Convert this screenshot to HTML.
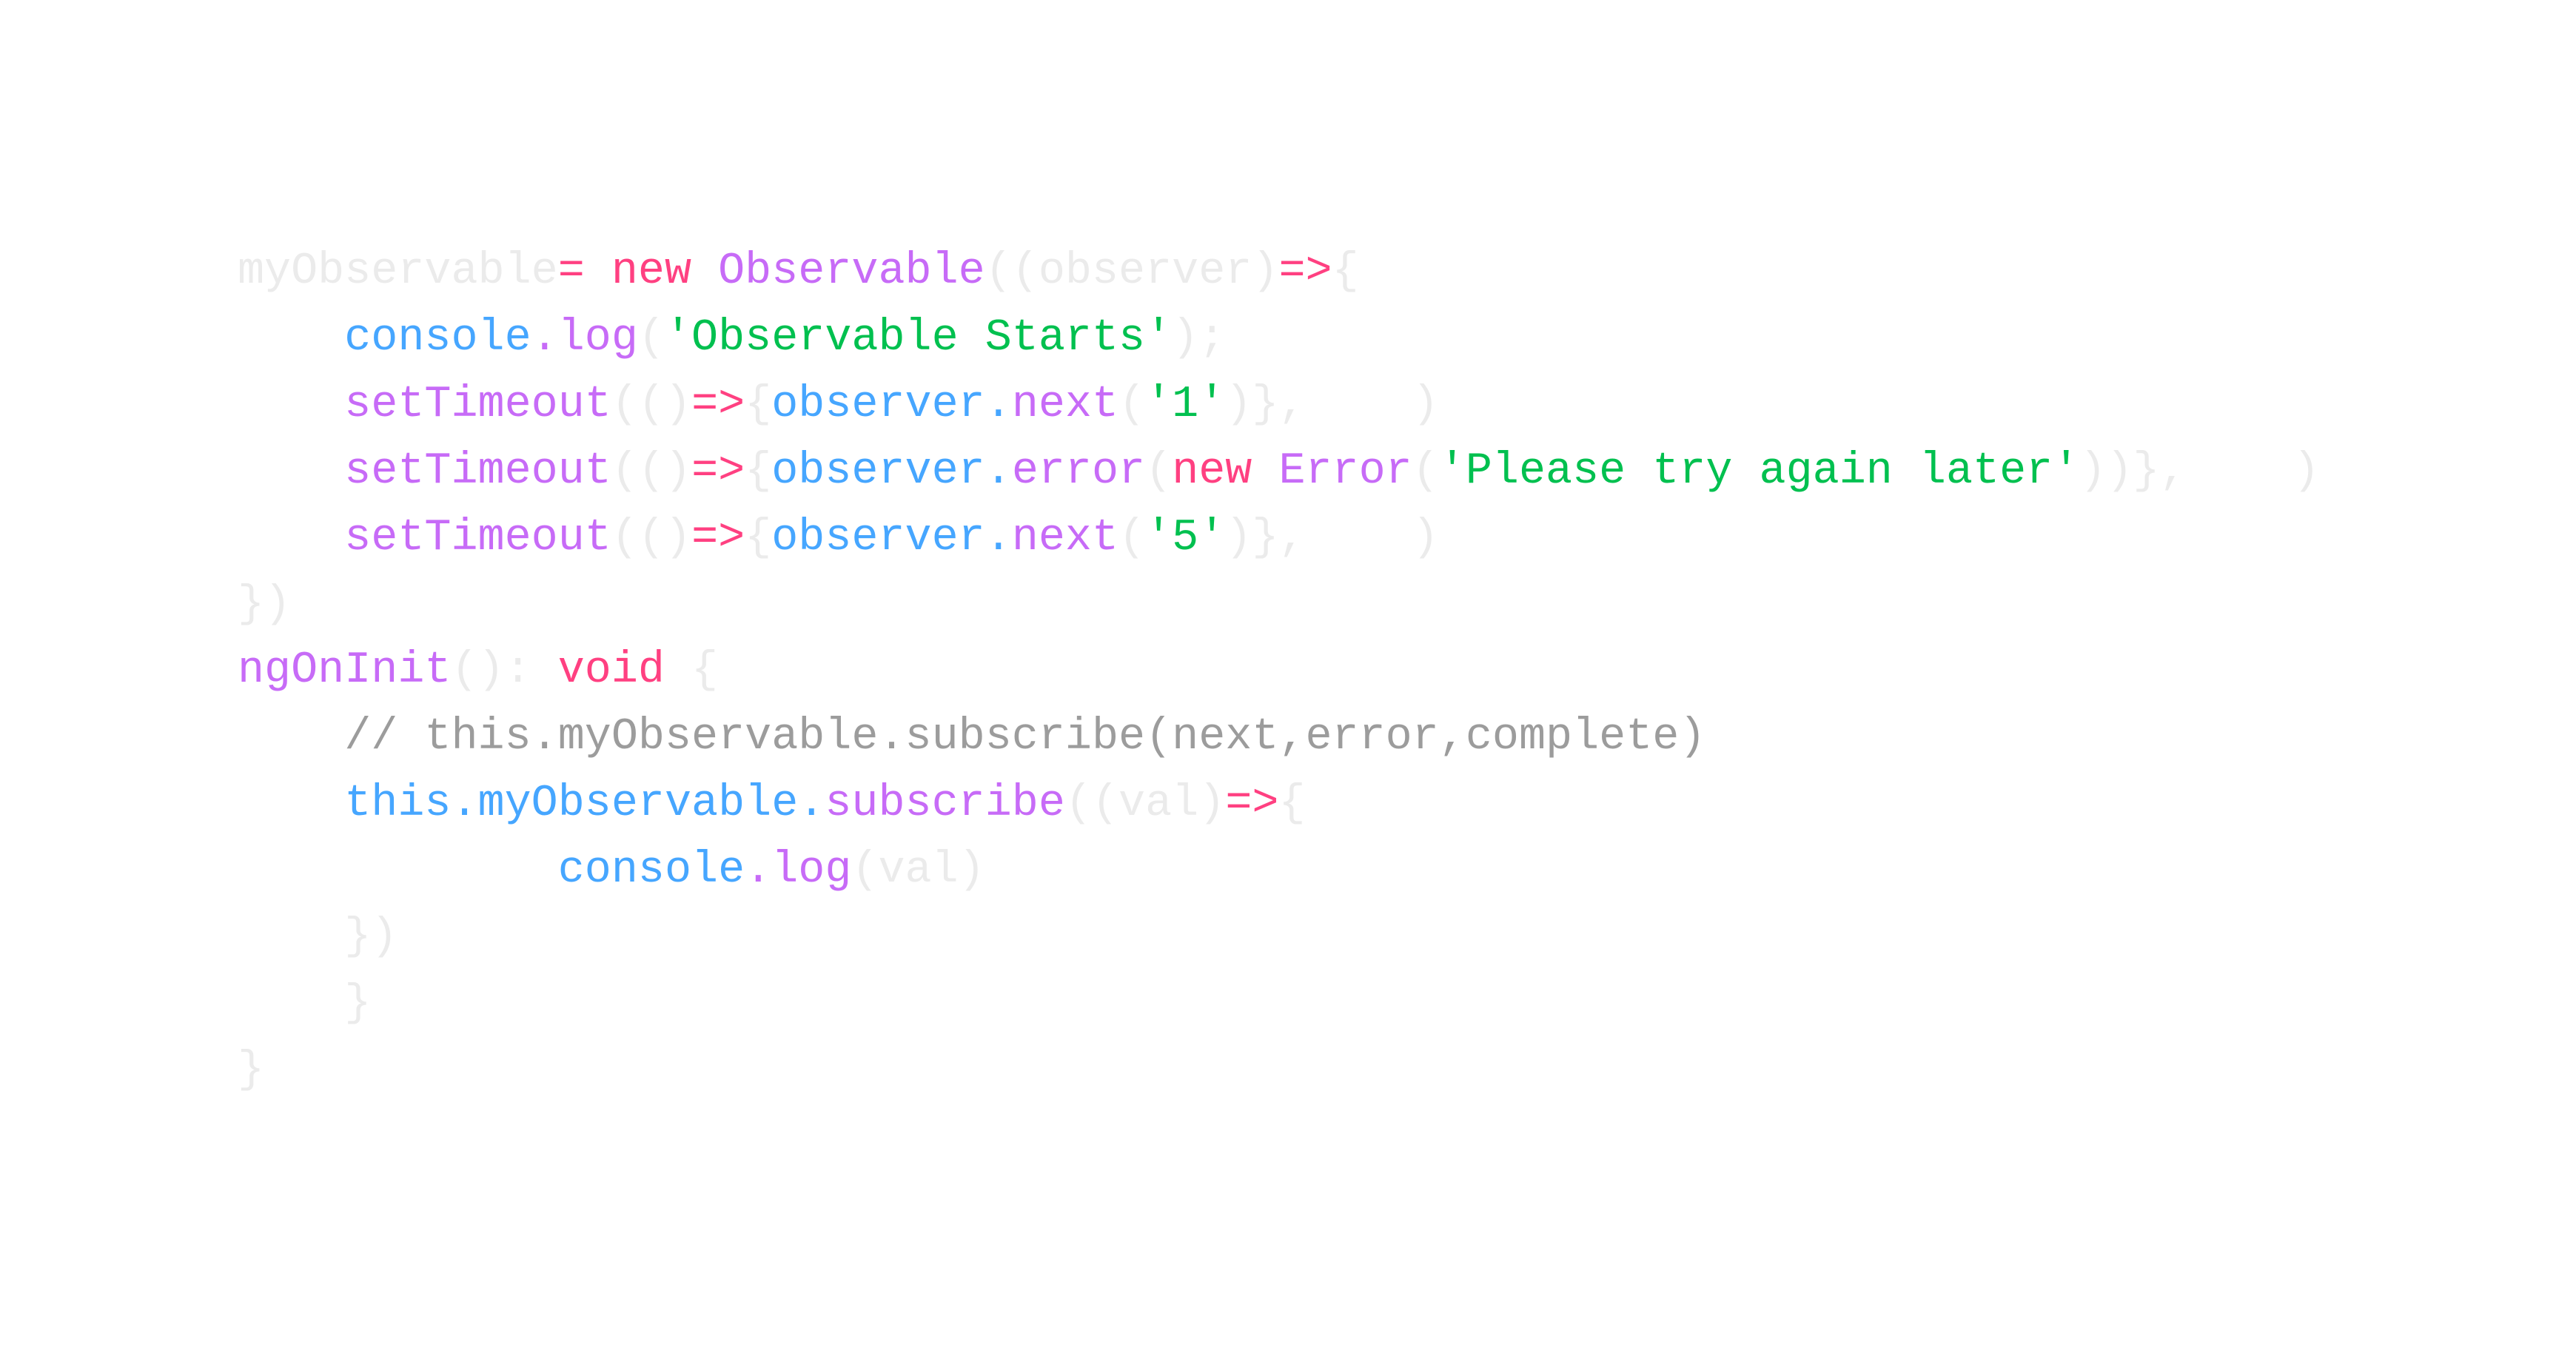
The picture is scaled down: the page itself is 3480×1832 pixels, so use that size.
<!DOCTYPE html>
<html><head><meta charset="utf-8"><style>
html,body{margin:0;padding:0;background:#fff;width:3480px;height:1832px;overflow:hidden}
pre{position:absolute;left:321px;top:323px;margin:0;font-family:"Liberation Mono",monospace;font-size:60.1px;line-height:89.9px;color:#ebebeb;white-space:pre}
.k{color:#ff4081}.p{color:#c76bf7}.b{color:#46a6ff}.g{color:#00c04f}.c{color:#9c9c9c}
</style></head><body>
<pre>myObservable<span class="k">=</span> <span class="k">new</span> <span class="p">Observable</span>((observer)<span class="k">=&gt;</span>{
    <span class="b">console</span><span class="p">.log</span>(<span class="g">'Observable Starts'</span>);
    <span class="p">setTimeout</span>(()<span class="k">=&gt;</span>{<span class="b">observer.</span><span class="p">next</span>(<span class="g">'1'</span>)},    )
    <span class="p">setTimeout</span>(()<span class="k">=&gt;</span>{<span class="b">observer.</span><span class="p">error</span>(<span class="k">new</span> <span class="p">Error</span>(<span class="g">'Please try again later'</span>))},    )
    <span class="p">setTimeout</span>(()<span class="k">=&gt;</span>{<span class="b">observer.</span><span class="p">next</span>(<span class="g">'5'</span>)},    )
})
<span class="p">ngOnInit</span>(): <span class="k">void</span> {
    <span class="c">// this.myObservable.subscribe(next,error,complete)</span>
    <span class="b">this.myObservable.</span><span class="p">subscribe</span>((val)<span class="k">=&gt;</span>{
            <span class="b">console</span><span class="p">.log</span>(val)
    })
    }
}</pre>
</body></html>
